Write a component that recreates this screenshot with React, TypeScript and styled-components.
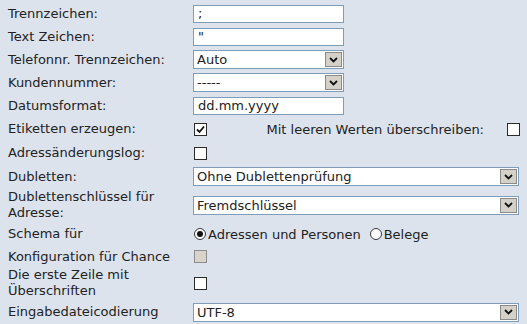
import React from 'react';
import styled, { createGlobalStyle } from 'styled-components';

const GlobalStyle = createGlobalStyle`
  body {
    margin: 0;
    background-color: #dce3ed;
    font-family: "DejaVu Sans", Verdana, sans-serif;
    font-size: 13px;
    color: #222;
  }
`;

const Form = styled.div`
  padding: 2px 7px 0 8px;
`;

const Row = styled.div<{ $h: number }>`
  display: grid;
  grid-template-columns: 185px 1fr;
  align-items: center;
  height: ${(p) => p.$h}px;
`;

const Label = styled.div`
  line-height: 16px;
  padding-right: 4px;
`;

const Cell = styled.div`
  display: flex;
  align-items: center;
`;

const TextInput = styled.div`
  box-sizing: border-box;
  width: 151px;
  height: 18px;
  border: 1px solid #7f9db9;
  background: #fff;
  padding-left: 4px;
  line-height: 16px;
`;

const SelectBox = styled.div<{ $wide?: boolean }>`
  box-sizing: border-box;
  display: flex;
  align-items: center;
  width: ${(p) => (p.$wide ? 326 : 151)}px;
  height: 19px;
  border: 1px solid #7f9db9;
  background: #fff;
  padding: 0 1px 0 3px;
`;

const SelectValue = styled.span`
  flex: 1;
  line-height: 17px;
`;

const ArrowButton = styled.span`
  box-sizing: border-box;
  display: flex;
  align-items: center;
  justify-content: center;
  width: 17px;
  height: 15px;
  border: 1px solid #8a8a8a;
  background: #d6d1c8;
`;

const Box = styled.span<{ $disabled?: boolean }>`
  box-sizing: border-box;
  display: inline-flex;
  align-items: center;
  justify-content: center;
  width: 13px;
  height: 13px;
  margin-left: 1px;
  border: 1px solid ${(p) => (p.$disabled ? '#8d8d8d' : '#2b2b2b')};
  background: ${(p) => (p.$disabled ? '#d8d3cb' : '#fff')};
`;

const Radio = styled.span<{ $on?: boolean }>`
  box-sizing: border-box;
  display: inline-flex;
  align-items: center;
  justify-content: center;
  width: 12px;
  height: 12px;
  margin-left: 1px;
  border-radius: 50%;
  border: 1px solid #3a3a3a;
  background: #fff;

  &::after {
    content: '';
    display: ${(p) => (p.$on ? 'block' : 'none')};
    width: 6px;
    height: 6px;
    border-radius: 50%;
    background: #111;
  }
`;

const RadioText = styled.span`
  margin: 0 8px 0 2px;
`;

const SideLabel = styled.span`
  margin-left: auto;
  margin-right: 22px;
`;

function Select({ value, wide }: { value: string; wide?: boolean }) {
  return (
    <SelectBox $wide={wide}>
      <SelectValue>{value}</SelectValue>
      <ArrowButton>
        <svg width="9" height="6" viewBox="0 0 9 6">
          <path d="M1 1 L4.5 4.5 L8 1" fill="none" stroke="#111" strokeWidth="1.8" />
        </svg>
      </ArrowButton>
    </SelectBox>
  );
}

function Check({ checked, disabled }: { checked?: boolean; disabled?: boolean }) {
  return (
    <Box $disabled={disabled}>
      {checked && (
        <svg width="9" height="9" viewBox="0 0 9 9">
          <path d="M1 4.5 L3.5 7 L8 1.5" fill="none" stroke="#111" strokeWidth="1.8" />
        </svg>
      )}
    </Box>
  );
}

export default function App() {
  return (
    <Form>
      <GlobalStyle />
      <Row $h={23}>
        <Label>Trennzeichen:</Label>
        <Cell><TextInput>;</TextInput></Cell>
      </Row>
      <Row $h={23}>
        <Label>Text Zeichen:</Label>
        <Cell><TextInput>"</TextInput></Cell>
      </Row>
      <Row $h={23}>
        <Label>Telefonnr. Trennzeichen:</Label>
        <Cell><Select value="Auto" /></Cell>
      </Row>
      <Row $h={23}>
        <Label>Kundennummer:</Label>
        <Cell><Select value="-----" /></Cell>
      </Row>
      <Row $h={23}>
        <Label>Datumsformat:</Label>
        <Cell><TextInput>dd.mm.yyyy</TextInput></Cell>
      </Row>
      <Row $h={24}>
        <Label>Etiketten erzeugen:</Label>
        <Cell>
          <Check checked />
          <SideLabel>Mit leeren Werten überschreiben:</SideLabel>
          <Check />
        </Cell>
      </Row>
      <Row $h={24}>
        <Label>Adressänderungslog:</Label>
        <Cell><Check /></Cell>
      </Row>
      <Row $h={23}>
        <Label>Dubletten:</Label>
        <Cell><Select wide value="Ohne Dublettenprüfung" /></Cell>
      </Row>
      <Row $h={34}>
        <Label>Dublettenschlüssel für Adresse:</Label>
        <Cell><Select wide value="Fremdschlüssel" /></Cell>
      </Row>
      <Row $h={24}>
        <Label>Schema für</Label>
        <Cell>
          <Radio $on />
          <RadioText>Adressen und Personen</RadioText>
          <Radio />
          <RadioText>Belege</RadioText>
        </Cell>
      </Row>
      <Row $h={21}>
        <Label>Konfiguration für Chance</Label>
        <Cell><Check disabled /></Cell>
      </Row>
      <Row $h={32}>
        <Label>Die erste Zeile mit Überschriften</Label>
        <Cell><Check /></Cell>
      </Row>
      <Row $h={26}>
        <Label>Eingabedateicodierung</Label>
        <Cell><Select wide value="UTF-8" /></Cell>
      </Row>
    </Form>
  );
}
